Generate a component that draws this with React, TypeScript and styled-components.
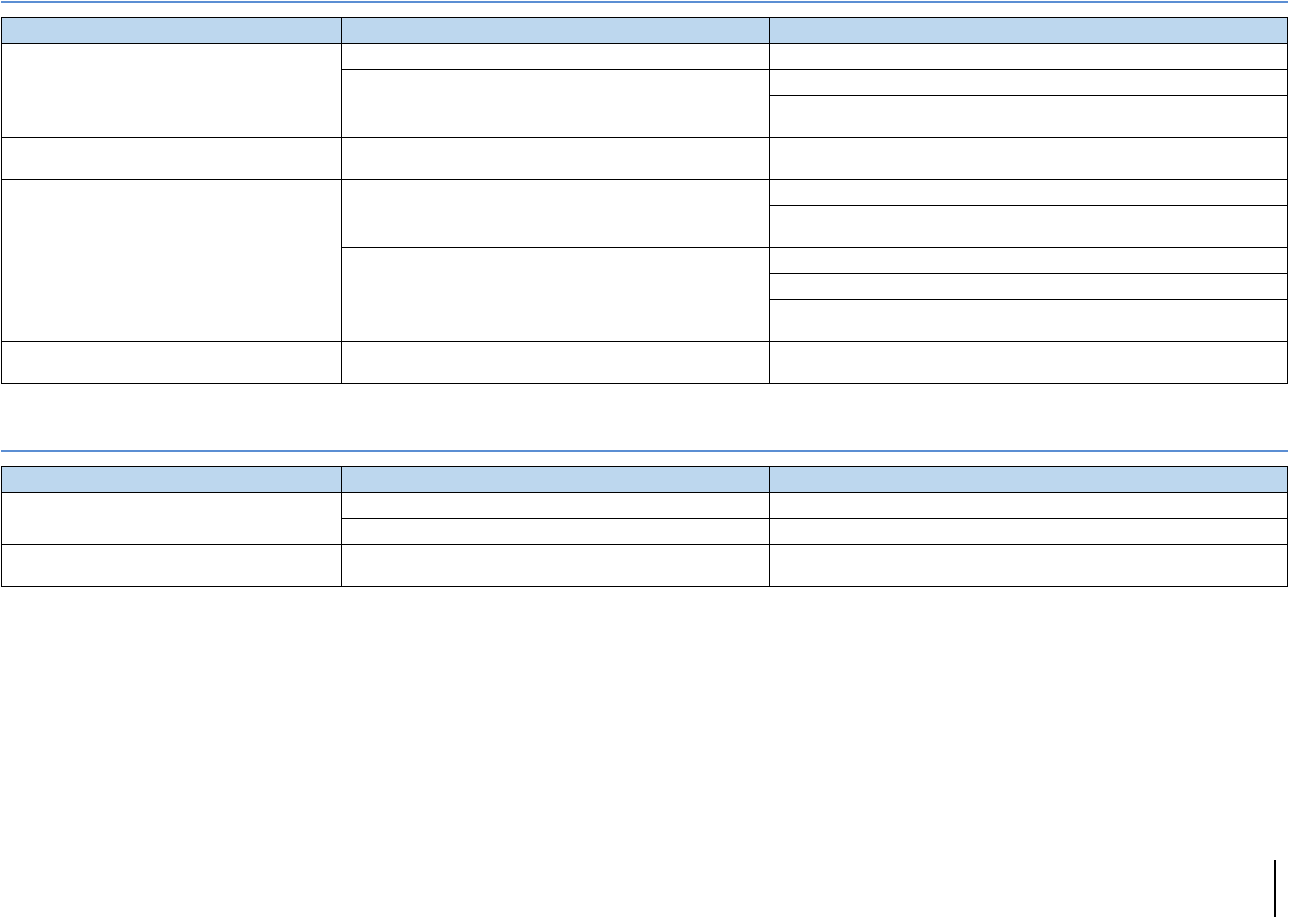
import React from "react"
import styled, { createGlobalStyle } from "styled-components"

const GlobalStyle = createGlobalStyle`
  html, body {
    margin: 0;
    padding: 0;
    background: #ffffff;
    overflow: hidden;
    font-family: "Liberation Sans", Arial, sans-serif;
  }
`

const Page = styled.div`
  display: flex;
  flex-direction: column;
  height: 917px;
  padding-left: 1px;
  box-sizing: border-box;
`

const Section = styled.section<{ $top: number }>`
  display: flex;
  flex-direction: column;
  gap: 14px;
  margin-top: ${(p) => p.$top}px;
`

const Rule = styled.div`
  width: 1287px;
  height: 2px;
  background: #5b8ed3;
`

const Grid = styled.div<{ $rows: string }>`
  display: grid;
  grid-template-columns: 340px 428px 518px;
  grid-template-rows: ${(p) => p.$rows};
  width: 1287px;
  box-sizing: border-box;
  border-top: 1px solid #000;
  border-left: 1px solid #000;
`

const Cell = styled.div<{ $col: number; $row: number; $span?: number; $head?: boolean }>`
  grid-column: ${(p) => p.$col};
  grid-row: ${(p) => p.$row} / span ${(p) => p.$span ?? 1};
  box-sizing: border-box;
  border-right: 1px solid #000;
  border-bottom: 1px solid #000;
  background: ${(p) => (p.$head ? "#bdd7ee" : "#ffffff")};
  font-size: 12px;
  color: #000;
`

const Footer = styled.div`
  display: flex;
  justify-content: flex-end;
  margin-top: auto;
  padding-right: 13px;
`

const PageMark = styled.div`
  width: 2px;
  height: 57px;
  background: #000;
`

type CellDef = [col: number, row: number, span?: number]

const tableOne: CellDef[] = [
  [1, 2, 3], [1, 5], [1, 6, 5], [1, 11],
  [2, 2], [2, 3, 2], [2, 5], [2, 6, 2], [2, 8, 3], [2, 11],
  [3, 2], [3, 3], [3, 4], [3, 5], [3, 6], [3, 7], [3, 8], [3, 9], [3, 10], [3, 11],
]

const tableTwo: CellDef[] = [
  [1, 2, 2], [1, 4],
  [2, 2], [2, 3], [2, 4],
  [3, 2], [3, 3], [3, 4],
]

const Table = ({ rows, cells }: { rows: string; cells: CellDef[] }) => (
  <Grid $rows={rows}>
    <Cell $col={1} $row={1} $head />
    <Cell $col={2} $row={1} $head />
    <Cell $col={3} $row={1} $head />
    {cells.map(([col, row, span], i) => (
      <Cell key={i} $col={col} $row={row} $span={span} />
    ))}
  </Grid>
)

export default function App() {
  return (
    <>
      <GlobalStyle />
      <Page>
        <Section $top={1}>
          <Rule />
          <Table
            rows="26px 26px 26px 42px 42px 26px 42px 26px 26px 42px 42px"
            cells={tableOne}
          />
        </Section>
        <Section $top={66}>
          <Rule />
          <Table rows="26px 26px 26px 42px" cells={tableTwo} />
        </Section>
        <Footer>
          <PageMark />
        </Footer>
      </Page>
    </>
  )
}
